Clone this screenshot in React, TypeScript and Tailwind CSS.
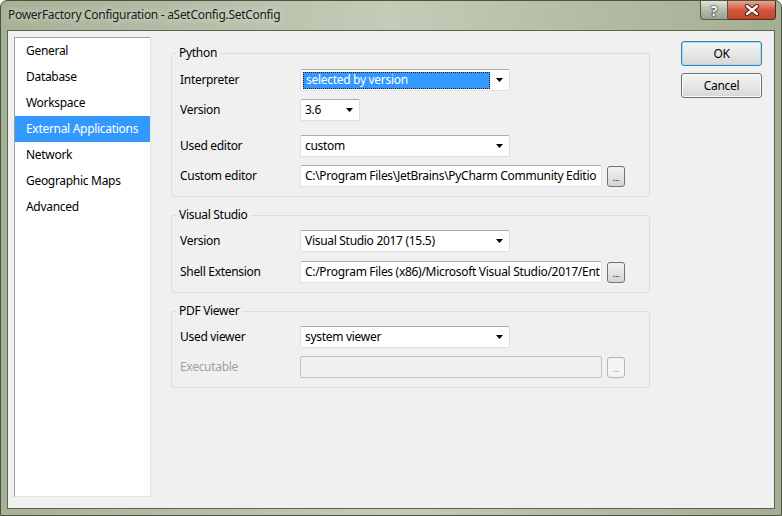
import React from "react";

const items = ["General", "Database", "Workspace", "External Applications", "Network", "Geographic Maps", "Advanced"];

function Arrow() {
  return (
    <svg width="7" height="4" viewBox="0 0 7 4" className="shrink-0">
      <path d="M0 0h7L3.5 4z" fill="#000" />
    </svg>
  );
}

function Combo(props: { w: string; value: string; selected?: boolean }) {
  const { w, value, selected } = props;
  return (
    <div className={`flex h-[22px] items-center rounded-[2px] border border-[#dedede] border-t-[#acacac] bg-white pr-[6px] ${w}`}>
      {selected ? (
        <div className="ml-[2px] flex h-[17px] w-[187px] items-center border border-dotted border-[#222] bg-[#3399ff] pl-[2px] text-white">
          {value}
        </div>
      ) : (
        <div className="flex-1 pl-[4px]">{value}</div>
      )}
      <div className="ml-auto">
        <Arrow />
      </div>
    </div>
  );
}

function PathInput(props: { value: string; disabled?: boolean }) {
  const { value, disabled } = props;
  return (
    <div className="flex items-center gap-[5px]">
      <div
        className={`flex h-[22px] w-[302px] items-center overflow-hidden whitespace-nowrap rounded-[2px] border pl-[4px] ${
          disabled ? "border-[#c2c2c2] bg-[#f0f0f0]" : "border-[#e2e3ea] border-t-[#abadb3] bg-white"
        }`}
      >
        {value}
      </div>
      <div
        className={`flex h-[21px] w-[18px] items-end justify-center rounded-[3px] border pb-[4px] text-[9px] leading-none ${
          disabled
            ? "border-[#b5b5b5] bg-[#f4f4f4] text-[#9a9a9a]"
            : "border-[#707070] bg-gradient-to-b from-[#f2f2f2] to-[#d4d4d4] text-black"
        }`}
      >
        ...
      </div>
    </div>
  );
}

function Row(props: { label: string; disabled?: boolean; children: React.ReactNode }) {
  return (
    <div className="flex items-center">
      <div className={`w-[120px] ${props.disabled ? "text-[#a0a0a0]" : "text-black"}`}>{props.label}</div>
      {props.children}
    </div>
  );
}

function Group(props: { title: string; className: string; children: React.ReactNode }) {
  return (
    <fieldset className={`rounded-[3px] border border-[#d5dfe5] pl-[8px] pr-[8px] ${props.className}`}>
      <legend className="-ml-[4px] h-[16px] px-[3px] leading-[16px]">{props.title}</legend>
      {props.children}
    </fieldset>
  );
}

function WinButton(props: { label: string; focused?: boolean }) {
  return (
    <div
      className={`flex h-[25px] w-[81px] items-center justify-center rounded-[3px] border bg-gradient-to-b from-[#f3f3f3] via-[#e8e8e8] to-[#d6d6d6] ${
        props.focused ? "border-[#3c7fb1] shadow-[inset_0_0_0_1px_#a8dcf5]" : "border-[#707070] shadow-[inset_0_0_0_1px_#fbfbfb]"
      }`}
    >
      {props.label}
    </div>
  );
}

export default function App() {
  return (
    <div className="h-[516px] w-[782px] overflow-hidden bg-white font-['Noto_Sans',sans-serif] text-[12px] tracking-[-0.3px]">
      <div className="flex h-full flex-col rounded-t-[7px] border border-[#4b5343] bg-gradient-to-r from-[#a6b198] via-[#c3ccb6] to-[#a3ae95]">
        <div className="flex h-[29px] items-start">
          <div className="pl-[7px] pt-[5px] text-[12px] text-[#1b1b1b] [text-shadow:0_0_6px_#e8eedf]">
            PowerFactory Configuration - aSetConfig.SetConfig
          </div>
          <div className="ml-auto mr-[5px] flex">
            <div className="flex h-[19px] w-[28px] items-center justify-center rounded-bl-[4px] border border-t-0 border-[#4d5a4b] bg-gradient-to-b from-[#dfe5d8] via-[#b4bdaa] to-[#98a38f] text-[14px] font-bold text-white [text-shadow:0_0_2px_#000,0_0_1px_#000]">
              ?
            </div>
            <div className="flex h-[19px] w-[48px] items-center justify-center rounded-br-[4px] border border-l-0 border-t-0 border-[#4d2a22] bg-gradient-to-b from-[#e8a493] via-[#d0573e] to-[#c3452b]">
              <svg width="16" height="12" viewBox="0 0 16 12">
                <path d="M3 2l10 8M13 2L3 10" stroke="#3a1a14" strokeWidth="4.2" strokeLinecap="round" />
                <path d="M3 2l10 8M13 2L3 10" stroke="#fff" strokeWidth="2.4" strokeLinecap="round" />
              </svg>
            </div>
          </div>
        </div>
        <div className="mx-[6px] mb-[6px] flex flex-1 border border-[#5b6453] bg-[#f0f0f0] px-[6px] pt-[6px] text-black">
          <div className="h-[460px] w-[137px] border border-[#a0a0a0] border-b-[#e3e3e3] border-r-[#e3e3e3] bg-white">
            {items.map((it) => (
              <div
                key={it}
                className={`flex h-[26px] items-center pl-[11px] ${it === "External Applications" ? "bg-[#3399ff] text-white" : ""}`}
              >
                {it}
              </div>
            ))}
          </div>
          <div className="ml-[20px] flex w-[479px] flex-col gap-[10px] pt-[8px]">
            <Group title="Python" className="pb-[9px]">
              <div className="flex flex-col pt-[8px]">
                <Row label="Interpreter">
                  <Combo w="w-[210px]" value="selected by version" selected />
                </Row>
                <div className="mt-[8px]">
                  <Row label="Version">
                    <Combo w="w-[60px]" value="3.6" />
                  </Row>
                </div>
                <div className="mt-[14px]">
                  <Row label="Used editor">
                    <Combo w="w-[210px]" value="custom" />
                  </Row>
                </div>
                <div className="mt-[8px]">
                  <Row label="Custom editor">
                    <PathInput value="C:\Program Files\JetBrains\PyCharm Community Editio" />
                  </Row>
                </div>
              </div>
            </Group>
            <Group title="Visual Studio" className="pb-[9px]">
              <div className="flex flex-col gap-[9px] pt-[7px]">
                <Row label="Version">
                  <Combo w="w-[210px]" value="Visual Studio 2017 (15.5)" />
                </Row>
                <Row label="Shell Extension">
                  <PathInput value="C:/Program Files (x86)/Microsoft Visual Studio/2017/Ent" />
                </Row>
              </div>
            </Group>
            <Group title="PDF Viewer" className="pb-[9px]">
              <div className="flex flex-col gap-[8px] pt-[7px]">
                <Row label="Used viewer">
                  <Combo w="w-[210px]" value="system viewer" />
                </Row>
                <Row label="Executable" disabled>
                  <PathInput value="" disabled />
                </Row>
              </div>
            </Group>
          </div>
          <div className="ml-auto mr-[6px] flex flex-col gap-[7px] pt-[4px]">
            <WinButton label="OK" focused />
            <WinButton label="Cancel" />
          </div>
        </div>
      </div>
    </div>
  );
}
